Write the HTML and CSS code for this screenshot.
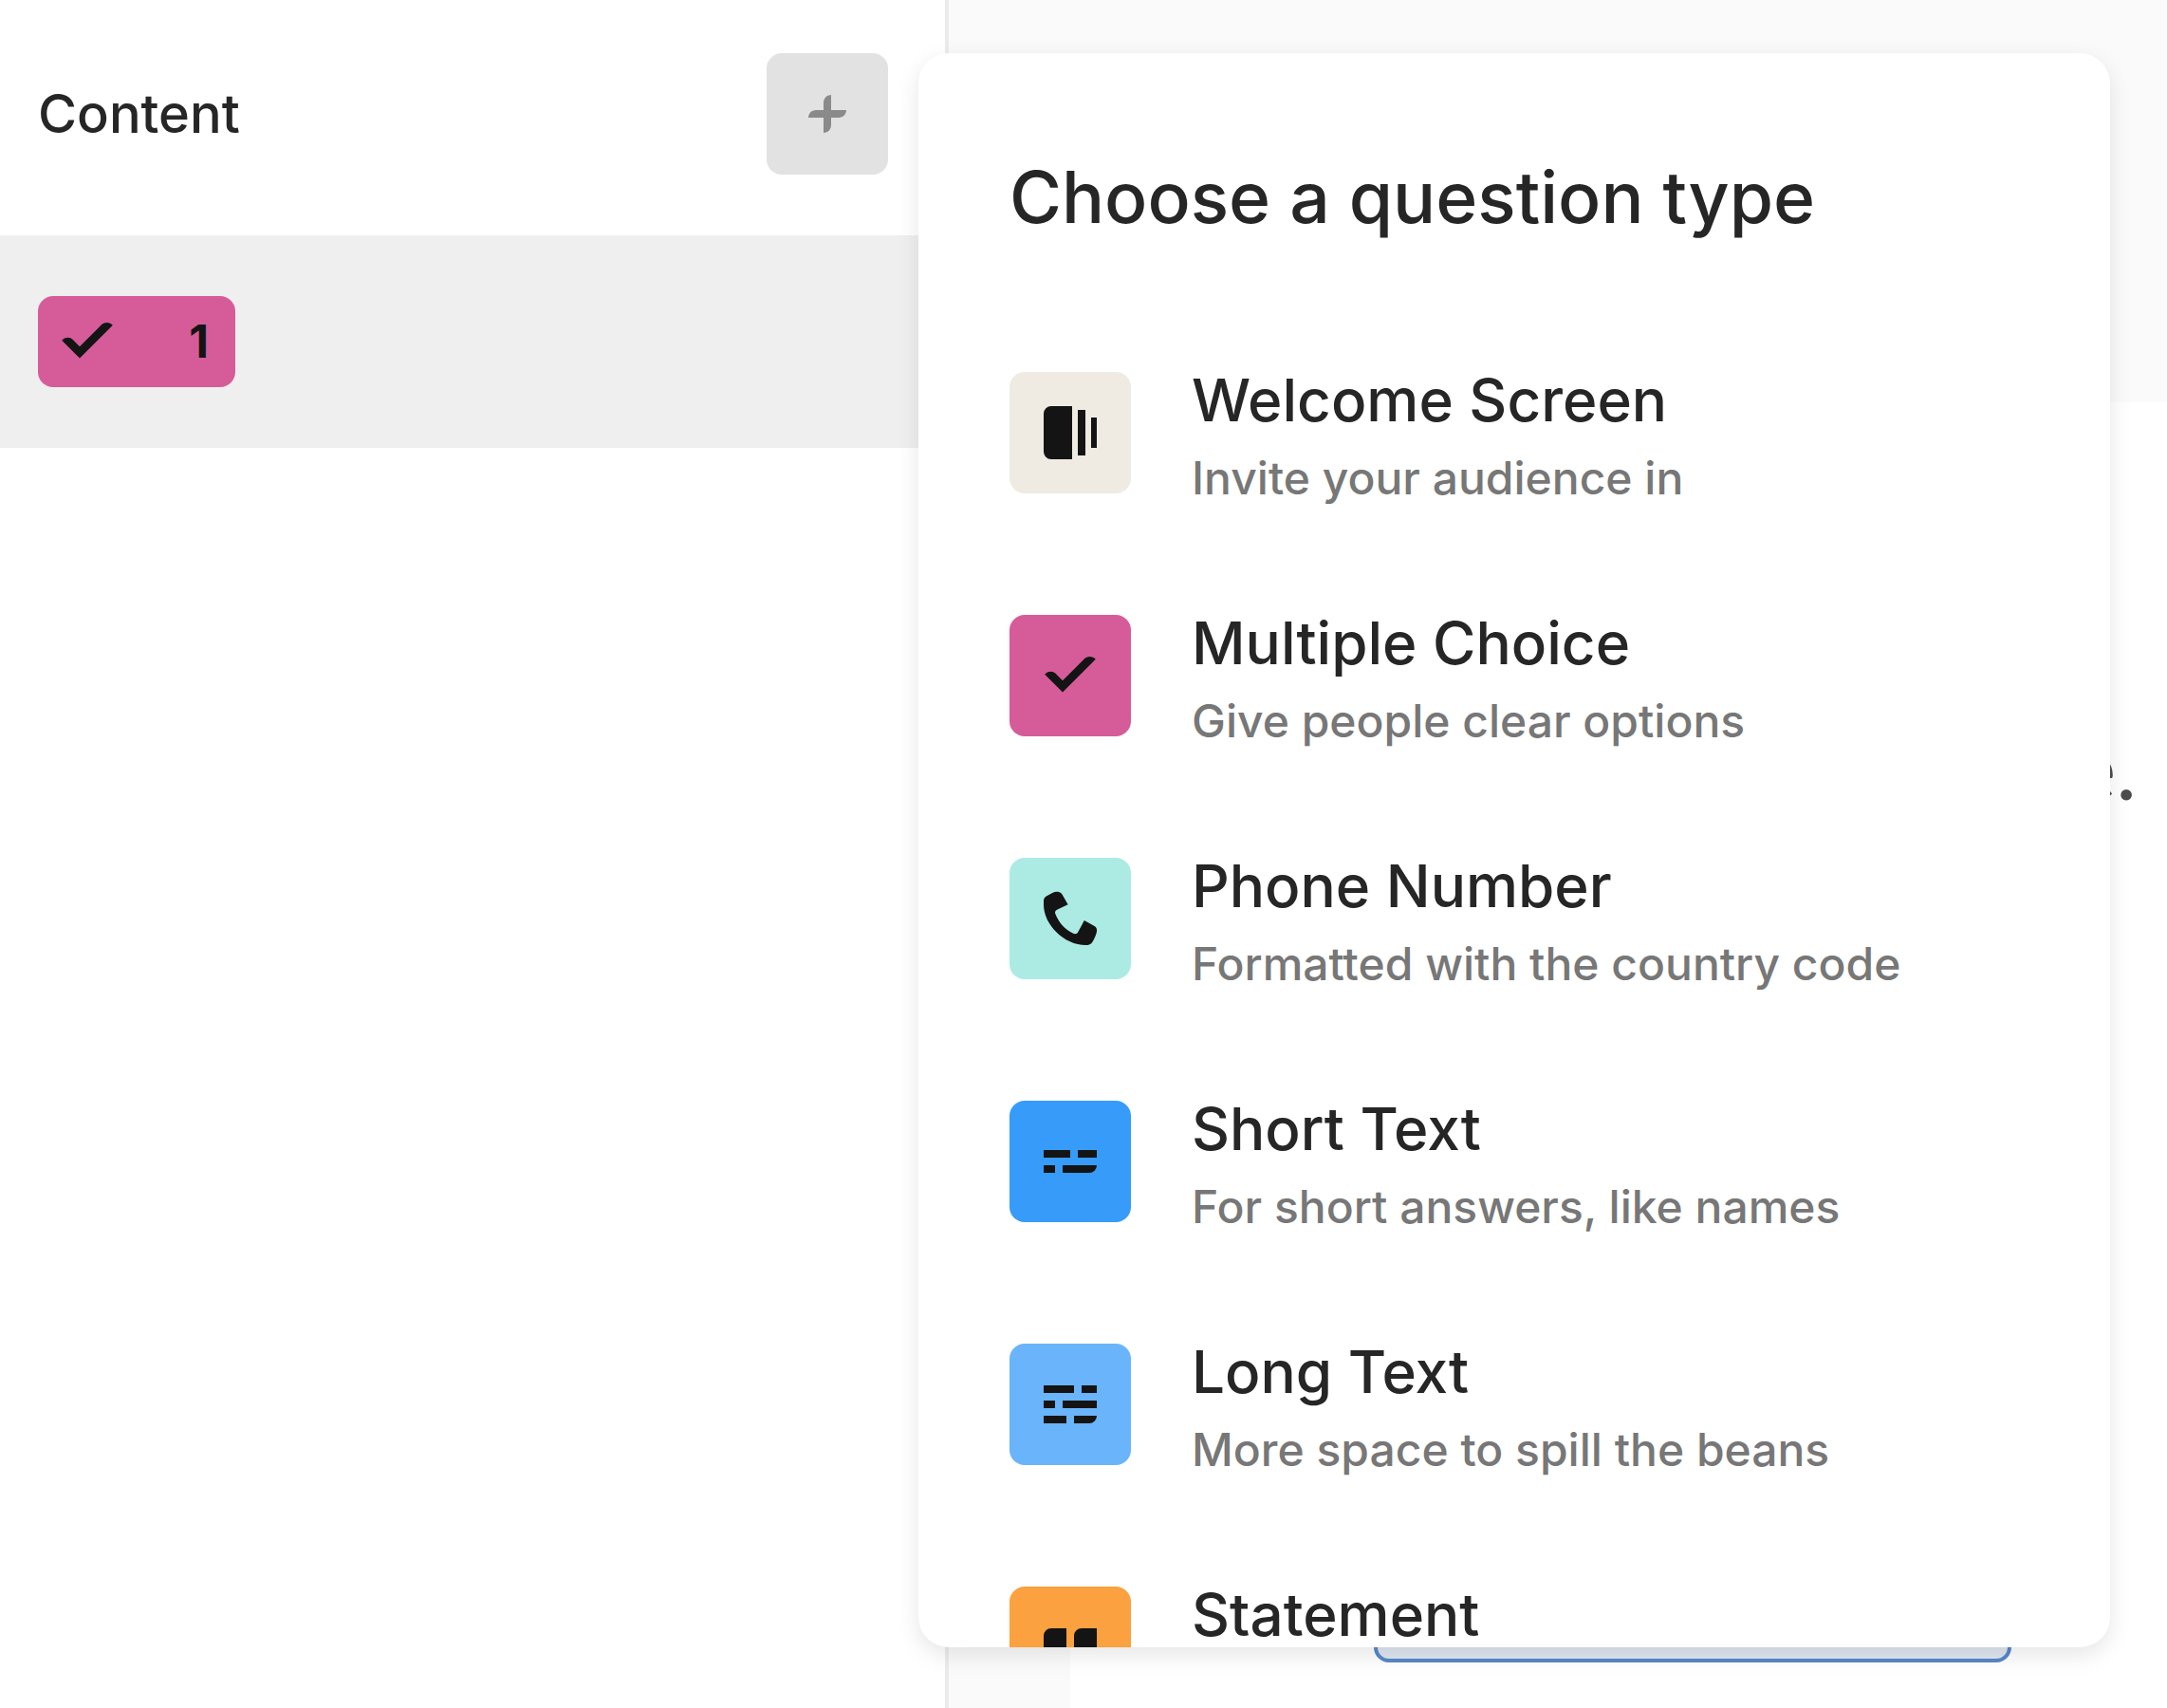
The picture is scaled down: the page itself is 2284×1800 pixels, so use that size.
FILE: index.html
```html
<!DOCTYPE html>
<html lang="en">
<head>
<meta charset="utf-8">
<title>Form builder</title>
<link rel="stylesheet" href="styles.css">
</head>
<body>
<svg class="sprite" aria-hidden="true">
  <symbol id="check" viewBox="0 0 16 16"><path d="M1.3 7.7C2 6.8 3.4 6.7 4.2 7.5L6 9.3L11.5 3.8C12.4 2.8 13.8 2.7 14.7 3.7L6 12.4Z"/></symbol>
</svg>
<div class="app">
  <aside class="sidebar">
    <header class="sidebar-head">
      <h2 class="sidebar-title">Content</h2>
      <button class="add" type="button" aria-label="Add question">
        <svg class="plus" viewBox="0 0 10 10"><path d="M4 4V2C4 .9 4.9 0 6 0V4H10C10 5.1 9.1 6 8 6H6V8C6 9.1 5.1 10 4 10V6H0C0 4.9 .9 4 2 4Z"/></svg>
      </button>
    </header>
    <div class="block">
      <span class="tag"><svg class="icon"><use href="#check"/></svg><span>1</span></span>
    </div>
  </aside>
  <main class="canvas">
    <section class="card">
      <p class="prompt">e.</p>
      <button class="choice" type="button" aria-label="Choice"></button>
    </section>
  </main>
  <section class="popover" aria-labelledby="types">
    <h1 class="popover-title" id="types">Choose a question type</h1>
    <div class="types">
      <button class="type" type="button">
        <span class="tile cream"><svg class="icon" viewBox="0 0 16 16"><path d="M8.5 1V15H3A2 2 0 0 1 1 13V3A2 2 0 0 1 3 1ZM10 2H12V14H10ZM13.5 4H15V12H13.5Z"/></svg></span>
        <span class="text"><span class="name">Welcome Screen</span><span class="desc">Invite your audience in</span></span>
      </button>
      <button class="type" type="button">
        <span class="tile pink"><svg class="icon"><use href="#check"/></svg></span>
        <span class="text"><span class="name">Multiple Choice</span><span class="desc">Give people clear options</span></span>
      </button>
      <button class="type" type="button">
        <span class="tile mint"><svg class="icon" viewBox="0 0 16 16"><path d="M1 4.3V3.4C1 2.8 1.2 2.4 1.7 2.1L3.2 1.3C3.8 1 4.4 .9 5 1C5.4 1.1 5.7 1.3 5.9 1.7L7.4 4.3L4.5 5.7C4 6 3.9 6.3 4.1 6.8C4.9 8.9 6.5 10.8 8.7 11.9C9.3 12.2 9.8 12.1 10.1 11.5L11.7 8.5L14.4 10C14.9 10.3 15.1 10.8 15 11.4C14.9 12.2 14.5 13.1 13.9 14.1C13.5 14.8 12.9 15 12.1 15C6.4 15 1 9.6 1 4.3Z"/></svg></span>
        <span class="text"><span class="name">Phone Number</span><span class="desc">Formatted with the country code</span></span>
      </button>
      <button class="type" type="button">
        <span class="tile blue"><svg class="icon" viewBox="0 0 16 16"><path d="M1 5H8V7H1ZM10 5H15V7H10ZM1 9H4V11H1ZM6 9H15A2 2 0 0 1 13 11H6Z"/></svg></span>
        <span class="text"><span class="name">Short Text</span><span class="desc">For short answers, like names</span></span>
      </button>
      <button class="type" type="button">
        <span class="tile sky"><svg class="icon" viewBox="0 0 16 16"><path d="M1 3H9V5H1ZM11 3H15V5H11ZM1 7H4V9H1ZM6 7H15V9H6ZM1 11H7V13H1ZM9 11H15A2 2 0 0 1 13 13H9Z"/></svg></span>
        <span class="text"><span class="name">Long Text</span><span class="desc">More space to spill the beans</span></span>
      </button>
      <button class="type" type="button">
        <span class="tile orange"><svg class="icon" viewBox="0 0 16 16"><path d="M1 5A2 2 0 0 1 3 3H7V9A4 4 0 0 1 3 13V9H1ZM9 5A2 2 0 0 1 11 3H15V9A4 4 0 0 1 11 13V9H9Z"/></svg></span>
        <span class="text"><span class="name">Statement</span></span>
      </button>
    </div>
  </section>
</div>
</body>
</html>
```

FILE: styles.css
```css
* { box-sizing: border-box; }

body {
  margin: 0;
  font-family: Inter, "Liberation Sans", sans-serif;
  color: #262627;
  background: #fff;
}

button {
  font: inherit;
  color: inherit;
  border: 0;
  padding: 0;
  background: none;
}

.sprite { position: absolute; width: 0; height: 0; }

.app {
  position: relative;
  display: flex;
  height: 100vh;
  overflow: hidden;
}

.sidebar {
  flex: 0 0 1000px;
  border-right: 4px solid #ebebeb;
  background: #fff;
}

.sidebar-head {
  display: flex;
  align-items: flex-start;
  justify-content: space-between;
  padding: 56px 60px 64px 40px;
}

.sidebar-title {
  margin: 0;
  font-size: 56px;
  line-height: 128px;
  font-weight: 500;
}

.add {
  display: grid;
  place-items: center;
  width: 128px;
  height: 128px;
  border-radius: 16px;
  background: #e2e2e2;
}

.plus { width: 40px; height: 40px; fill: #8a8a8a; }

.block { padding: 64px 40px; background: #efefef; }

.tag {
  display: flex;
  align-items: center;
  justify-content: space-between;
  width: 208px;
  height: 96px;
  padding: 0 28px 0 20px;
  border-radius: 16px;
  background: #d65c99;
  color: #141414;
  font-size: 48px;
  line-height: 92px;
  font-weight: 700;
}

.icon { display: block; width: 64px; height: 64px; fill: #141414; }

.canvas {
  flex: 1;
  display: flex;
  padding: 424px 0 0 128px;
  background: #fafafa;
}

.card {
  flex: 1;
  display: flex;
  flex-direction: column;
  justify-content: space-between;
  padding: 328px 32px 48px 320px;
  background: #fff;
}

.prompt {
  margin: 0;
  font-family: Lato, Inter, sans-serif;
  font-size: 92px;
  line-height: 112px;
  text-align: right;
  color: #4d4d4d;
}

.choice {
  width: 672px;
  height: 160px;
  border: 4px solid #5887c8;
  border-radius: 16px;
  background: #dfe6f1;
}

.popover {
  position: absolute;
  left: 968px;
  top: 56px;
  bottom: 64px;
  width: 1256px;
  padding: 96px;
  overflow: hidden;
  border-radius: 32px;
  background: #fff;
  box-shadow: 0 8px 24px rgba(0, 0, 0, 0.1);
}

.popover-title {
  margin: 0 0 128px;
  font-size: 75px;
  line-height: 112px;
  font-weight: 500;
}

.types { display: flex; flex-direction: column; gap: 96px; }

.type {
  display: flex;
  align-items: flex-start;
  gap: 64px;
  height: 160px;
  text-align: left;
}

.tile {
  display: grid;
  place-items: center;
  width: 128px;
  height: 128px;
  border-radius: 16px;
}

.cream { background: #efebe3; }
.pink { background: #d65c99; }
.mint { background: #acebe3; }
.blue { background: #379bfa; }
.sky { background: #69b4fa; }
.orange { background: #fba13f; }

.text { display: flex; flex-direction: column; white-space: nowrap; }
.name { font-size: 62px; line-height: 60px; font-weight: 500; }
.desc { font-size: 48px; line-height: 103px; font-weight: 500; color: #777; }
```
